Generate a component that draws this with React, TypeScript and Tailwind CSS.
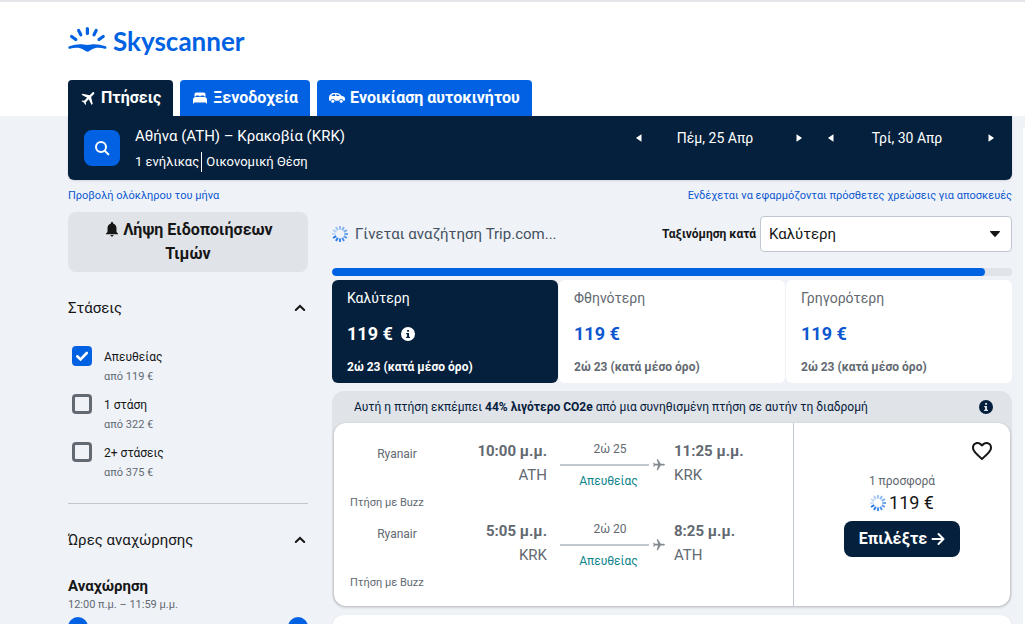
import { useState, type ReactNode } from "react";
import { IoBed } from "react-icons/io5";
import { MdFavoriteBorder, MdFlight, MdNotifications } from "react-icons/md";

type Leg = {
  id: string;
  airline: string;
  operator: string;
  departTime: string;
  departCode: string;
  arriveTime: string;
  arriveCode: string;
  duration: string;
};

const legs: Leg[] = [
  {
    id: "outbound",
    airline: "Ryanair",
    operator: "Πτήση με Buzz",
    departTime: "10:00 μ.μ.",
    departCode: "ATH",
    arriveTime: "11:25 μ.μ.",
    arriveCode: "KRK",
    duration: "2ώ 25",
  },
  {
    id: "return",
    airline: "Ryanair",
    operator: "Πτήση με Buzz",
    departTime: "5:05 μ.μ.",
    departCode: "KRK",
    arriveTime: "8:25 μ.μ.",
    arriveCode: "ATH",
    duration: "2ώ 20",
  },
];

const stopOptions = [
  { id: "direct", label: "Απευθείας", price: "από 119 €" },
  { id: "one", label: "1 στάση", price: "από 322 €" },
  { id: "two", label: "2+ στάσεις", price: "από 375 €" },
];

const sortOptions = ["Καλύτερη", "Φθηνότερη", "Γρηγορότερη"];

function Logo() {
  return (
    <a href="#" className="flex items-center gap-[5px] text-[#0062e3]">
      <svg viewBox="0 0 40 26" className="h-[26px] w-10 overflow-visible" fill="none" aria-hidden="true">
        <g stroke="currentColor" strokeWidth="3.2" strokeLinecap="round">
          <path d="M19.4 0.6v4.8" />
          <path d="M10.6 2.4l2.2 4.400" />
          <path d="M28.200 2.400l-2.200 4.400" />
          <path d="M3.600 8.400l4.200 3.200" />
          <path d="M35.200 8.400l-4.200 3.200" />
        </g>
        <path
          d="M1.200 18.300C5.500 16.800 9.800 16.100 14 16.300c2.200.1 3.600.7 5.400.7s3.200-.6 5.400-.7c4.200-.2 8.500.5 12.800 2 .7.3 1 .9.800 1.600-.2.700-.8 1-1.500.8-4-1.100-7.500-1.200-10.200-.5-2.200.6-3.900 1.700-5.500 2.900-1.200.8-2.400.8-3.600 0-1.600-1.200-3.300-2.300-5.500-2.900-2.700-.7-6.200-.6-10.200.5-.7.200-1.300-.1-1.500-.8-.2-.7.100-1.300.8-1.600z"
          fill="currentColor"
        />
      </svg>
      <span className="font-[Lato] text-[26px] font-bold">Skyscanner</span>
    </a>
  );
}

function CarIcon() {
  return (
    <svg viewBox="0 0 16 10" className="h-[10px] w-4" fill="currentColor" aria-hidden="true">
      <path
        fillRule="evenodd"
        d="M.4 2.600L2.800.500C3.300.1 3.800 0 4.500 0h3.300c1.600 0 3 .7 4.900 3 1.900.3 3.300.9 3.300 2.600v1.200c0 .6-.4 1-1 1h-.6a2.200 2.200 0 0 0-4.300 0H6a2.200 2.200 0 0 0-4.300 0H1c-.6 0-1-.4-1-1V4.200zM2.200 3h4V1.200H4.300zm5.200 0h3.400C9.700 1.800 9 1.300 7.400 1.200z"
      />
      <circle cx="3.800" cy="8.200" r="1.500" />
      <circle cx="12.200" cy="8.200" r="1.500" />
    </svg>
  );
}

function InfoIcon() {
  return (
    <svg viewBox="0 0 14 14" className="size-[14px]" aria-hidden="true">
      <path
        fillRule="evenodd"
        fill="currentColor"
        d="M7 0a7 7 0 1 1 0 14A7 7 0 0 1 7 0zm-.9 3v1.700h1.900V3zM5.200 6v1.200h.9v2.600h-1V11h3.900V9.800H8V6z"
      />
    </svg>
  );
}

function Spinner() {
  return (
    <svg viewBox="0 0 16 16" className="size-4 shrink-0" aria-hidden="true">
      {Array.from({ length: 12 }, (_, index) => (
        <path
          key={index}
          d="M8 0v3.600"
          stroke="#0062e3"
          strokeWidth="2"
          opacity={0.2 + ((index + 3) % 12) * 0.06}
          transform={`rotate(${index * 30} 8 8)`}
        />
      ))}
    </svg>
  );
}

function ChevronUp() {
  return (
    <svg viewBox="0 0 12 8" className="h-2 w-3" fill="none" aria-hidden="true">
      <path d="M1.800 6L6 2l4.200 4" stroke="#161616" strokeWidth="2" strokeLinecap="round" />
    </svg>
  );
}

function ProductTab({ icon, label, active = false }: { icon: ReactNode; label: string; active?: boolean }) {
  return (
    <a
      href="#"
      className={`flex h-9 items-center gap-[3px] rounded-t px-3 font-bold text-white ${
        active ? "bg-[#05203c]" : "bg-[#0062e3]"
      }`}
    >
      <span className="flex w-[18px] justify-start">{icon}</span>
      {label}
    </a>
  );
}

function DateStepper({ label }: { label: string }) {
  return (
    <div className="flex w-[176px] items-center justify-between text-sm">
      <button type="button" aria-label="Προηγούμενη ημέρα" className="flex h-6 w-4 items-center justify-center">
        <svg viewBox="0 0 6 8" className="h-2 w-[6px]" fill="currentColor">
          <path d="M5.500.2v7.600L.6 4.500a.6.6 0 0 1 0-1z" />
        </svg>
      </button>
      <span className="pr-2">{label}</span>
      <button type="button" aria-label="Επόμενη ημέρα" className="flex h-6 w-4 items-center justify-center">
        <svg viewBox="0 0 6 8" className="h-2 w-[6px]" fill="currentColor">
          <path d="M.5.2v7.600l4.900-3.300a.6.6 0 0 0 0-1z" />
        </svg>
      </button>
    </div>
  );
}

function StopOption({
  id,
  label,
  price,
  checked,
  onToggle,
}: {
  id: string;
  label: string;
  price: string;
  checked: boolean;
  onToggle: () => void;
}) {
  return (
    <label htmlFor={id} className="flex h-12 gap-3 pl-1">
      <span className="relative size-5 shrink-0">
        <input
          id={id}
          type="checkbox"
          checked={checked}
          onChange={onToggle}
          className="block size-5 appearance-none rounded border-[3px] border-[#626971] checked:border-[#0062e3] checked:bg-[#0062e3]"
        />
        {checked ? (
          <svg viewBox="0 0 20 20" className="pointer-events-none absolute inset-0 size-5" fill="none">
            <path d="M5.200 10.300l3.300 3.200 6.300-6.500" stroke="#fff" strokeWidth="2.600" strokeLinecap="round" />
          </svg>
        ) : null}
      </span>
      <span className="pt-px">
        <span className="block text-xs leading-5 text-[#161616]">{label}</span>
        <span className="block text-[11px] leading-5 text-[#626971]">{price}</span>
      </span>
    </label>
  );
}

function SortTab({ label, active, onSelect }: { label: string; active: boolean; onSelect: () => void }) {
  return (
    <button
      type="button"
      onClick={onSelect}
      className={`flex h-[103px] flex-1 flex-col justify-between rounded-md px-[15px] pt-2 pb-1 text-left ${
        active ? "bg-[#05203c] text-white" : "bg-white text-[#626971]"
      }`}
    >
      <span className="text-sm leading-5">{label}</span>
      <span
        className={`flex items-center gap-2 pt-1 text-lg font-bold ${active ? "" : "text-[#0c57d0]"}`}
      >
        119 €
        {active ? <InfoIcon /> : null}
      </span>
      <span className="text-xs leading-6 font-bold">2ώ 23 (κατά μέσο όρο)</span>
    </button>
  );
}

function FlightLeg({ leg }: { leg: Leg }) {
  return (
    <div className="h-20 pl-4 text-[15px]">
      <div className="flex h-[50px]">
        <span className="w-[94px] pt-[7px] text-center text-xs leading-4">{leg.airline}</span>
        <span className="w-[103px] text-right">
          <span className="block leading-6 font-bold">{leg.departTime}</span>
          <span className="block leading-6">{leg.departCode}</span>
        </span>
        <span className="mr-2 ml-[13px] w-[106px] pt-[2px] text-xs leading-4">
          <span className="block w-[100px] text-center">{leg.duration}</span>
          <span className="flex h-4 items-center gap-[3px]">
            <span className="h-[2px] flex-1 bg-[#c1c7cf]" />
            <MdFlight className="size-[14px] rotate-90 text-[#82898f]" />
          </span>
          <span className="block w-[97px] text-center text-[#0c838a]">Απευθείας</span>
        </span>
        <span>
          <span className="block leading-6 font-bold">{leg.arriveTime}</span>
          <span className="block leading-6">{leg.arriveCode}</span>
        </span>
      </div>
      <p className="pt-[6px] text-[11px] leading-4">{leg.operator}</p>
    </div>
  );
}

export default function App() {
  const [stops, setStops] = useState<string[]>(["direct"]);
  const [sort, setSort] = useState(sortOptions[0]);

  const toggleStop = (id: string) =>
    setStops((previous) =>
      previous.includes(id) ? previous.filter((stop) => stop !== id) : [...previous, id]
    );

  return (
    <div className="h-screen overflow-hidden bg-[#eff3f8] font-[Roboto,'Noto_Sans',sans-serif] text-base text-[#161616]">
      <header className="border-t-2 border-[#e3e5e8] bg-white pr-[13px] pl-[68px]">
        <div className="flex h-[78px] items-center">
          <Logo />
        </div>
        <nav className="flex gap-[7px]">
          <ProductTab active icon={<MdFlight className="size-[18px] rotate-45" />} label="Πτήσεις" />
          <ProductTab icon={<IoBed className="size-4" />} label="Ξενοδοχεία" />
          <ProductTab icon={<CarIcon />} label="Ενοικίαση αυτοκινήτου" />
        </nav>
      </header>

      <div className="flex">
        <div className="min-w-0 flex-1 pr-[11px] pl-[68px]">
          <section className="flex h-16 justify-between rounded-b-md bg-[#05203c] pr-[13px] pl-4 text-white shadow">
            <div className="flex items-center gap-[15px]">
              <button
                type="button"
                aria-label="Αναζήτηση"
                className="flex size-9 items-center justify-center rounded-lg bg-[#0062e3]"
              >
                <svg viewBox="0 0 16 16" className="size-4" fill="none" stroke="currentColor" strokeWidth="2">
                  <circle cx="7" cy="7" r="5" />
                  <path d="M10.800 10.800l3.600 3.600" strokeLinecap="round" />
                </svg>
              </button>
              <div className="flex flex-col gap-1">
                <h1 className="text-[15px] leading-6">Αθήνα (ATH) – Κρακοβία (KRK)</h1>
                <p className="flex items-center text-[13px] leading-5">
                  <span className="mr-1 border-r border-white pr-[2px]">1 ενήλικας</span>
                  Οικονομική Θέση
                </p>
              </div>
            </div>
            <div className="flex items-start gap-4 pt-[10px]">
              <DateStepper label="Πέμ, 25 Απρ" />
              <DateStepper label="Τρί, 30 Απρ" />
            </div>
          </section>

          <div className="flex h-8 items-center justify-between text-[11px] text-[#0c57d0]">
            <a href="#">Προβολή ολόκληρου του μήνα</a>
            <a href="#">Ενδέχεται να εφαρμόζονται πρόσθετες χρεώσεις για αποσκευές</a>
          </div>

          <div className="flex gap-6">
            <aside className="w-60 shrink-0">
              <button type="button" className="h-[60px] w-full rounded-lg bg-[#e0e3e8] px-6 leading-6 font-bold">
                <MdNotifications className="mr-[2px] inline size-[18px] align-[-3px]" />
                Λήψη Ειδοποιήσεων Τιμών
              </button>

              <button
                type="button"
                className="mt-6 flex h-6 w-full items-center justify-between pr-[2px] text-[15px]"
              >
                Στάσεις
                <ChevronUp />
              </button>
              <div className="mt-[26px] border-b border-[#c1c7cf] pb-[13px]">
                {stopOptions.map((option) => (
                  <StopOption
                    key={option.id}
                    {...option}
                    checked={stops.includes(option.id)}
                    onToggle={() => toggleStop(option.id)}
                  />
                ))}
              </div>

              <button
                type="button"
                className="mt-6 flex h-6 w-full items-center justify-between pr-[2px] text-[15px]"
              >
                Ώρες αναχώρησης
                <ChevronUp />
              </button>
              <h2 className="mt-6 text-[15px] leading-5 font-bold">Αναχώρηση</h2>
              <p className="pt-px text-[11px] leading-4 text-[#626971]">12:00 π.μ. – 11:59 μ.μ.</p>
              <div className="mt-1 flex justify-between">
                <button type="button" aria-label="Από" className="size-5 rounded-full bg-[#0062e3]" />
                <button type="button" aria-label="Έως" className="size-5 rounded-full bg-[#0062e3]" />
              </div>
            </aside>

            <main className="min-w-0 flex-1">
              <div className="flex h-11 items-center justify-between">
                <p className="flex items-center gap-[7px] text-[15px] text-[#44505f]">
                  <Spinner />
                  Γίνεται αναζήτηση Trip.com...
                </p>
                <div className="flex items-center gap-1">
                  <label htmlFor="sort" className="text-xs font-bold">
                    Ταξινόμηση κατά
                  </label>
                  <div className="relative">
                    <select
                      id="sort"
                      value={sort}
                      onChange={(event) => setSort(event.target.value)}
                      className="block h-9 w-[252px] appearance-none rounded border border-[#c1c7cf] bg-white px-2 text-[15px]"
                    >
                      {sortOptions.map((option) => (
                        <option key={option}>{option}</option>
                      ))}
                    </select>
                    <svg
                      viewBox="0 0 10 6"
                      className="pointer-events-none absolute top-[15px] right-3 h-[6px] w-[10px]"
                      fill="#161616"
                    >
                      <path d="M.6 0h8.800c.5 0 .8.600.4 1L5.700 5.600a1 1 0 0 1-1.400 0L.2 1C-.2.600.1 0 .6 0z" />
                    </svg>
                  </div>
                </div>
              </div>

              <div className="mt-3 h-2 overflow-hidden rounded-full bg-[#e0e3e8]">
                <div className="h-full w-24/25 rounded-full bg-[#0062e3]" />
              </div>

              <div className="mt-1 flex gap-px">
                {sortOptions.map((option) => (
                  <SortTab
                    key={option}
                    label={option}
                    active={option === sort}
                    onSelect={() => setSort(option)}
                  />
                ))}
              </div>

              <article className="mt-2 rounded-xl bg-[#e0e3e8]">
                <div className="flex h-8 items-center justify-between pr-[19px] pl-[22px] text-xs text-[#05203c]">
                  <p>
                    Αυτή η πτήση εκπέμπει <strong>44% λιγότερο CO2e</strong> από μια συνηθισμένη πτήση σε αυτήν τη
                    διαδρομή
                  </p>
                  <InfoIcon />
                </div>
                <div className="mx-[2px] flex rounded-xl bg-white text-[#626971] shadow-[0_1px_3px_#25201f4d]">
                  <div className="flex-1 pt-4 pb-[7px]">
                    {legs.map((leg) => (
                      <FlightLeg key={leg.id} leg={leg} />
                    ))}
                  </div>
                  <div className="flex w-[217px] flex-col items-center border-l border-[#c1c7cf] pt-4">
                    <button type="button" aria-label="Αποθήκευση" className="mr-4 self-end text-[#161616]">
                      <MdFavoriteBorder className="size-6" />
                    </button>
                    <p className="mt-[10px] text-xs leading-4">1 προσφορά</p>
                    <p className="flex items-center gap-[3px] text-lg leading-7 text-[#161616]">
                      <Spinner />
                      119 €
                    </p>
                    <button
                      type="button"
                      className="mt-1 flex h-9 items-center gap-1 rounded-lg bg-[#05203c] px-[15px] font-bold text-white"
                    >
                      Επιλέξτε
                      <svg viewBox="0 0 14 14" className="size-[14px]" fill="none" stroke="currentColor" strokeWidth="2">
                        <path d="M1.500 7h11M7.500 2l5 5-5 5" strokeLinecap="round" strokeLinejoin="round" />
                      </svg>
                    </button>
                  </div>
                </div>
              </article>

              <div className="mt-[9px] h-20 rounded-xl bg-white shadow" />
            </main>
          </div>
        </div>
        <div className="mt-3 h-screen w-[2px] bg-white" />
      </div>
    </div>
  );
}
